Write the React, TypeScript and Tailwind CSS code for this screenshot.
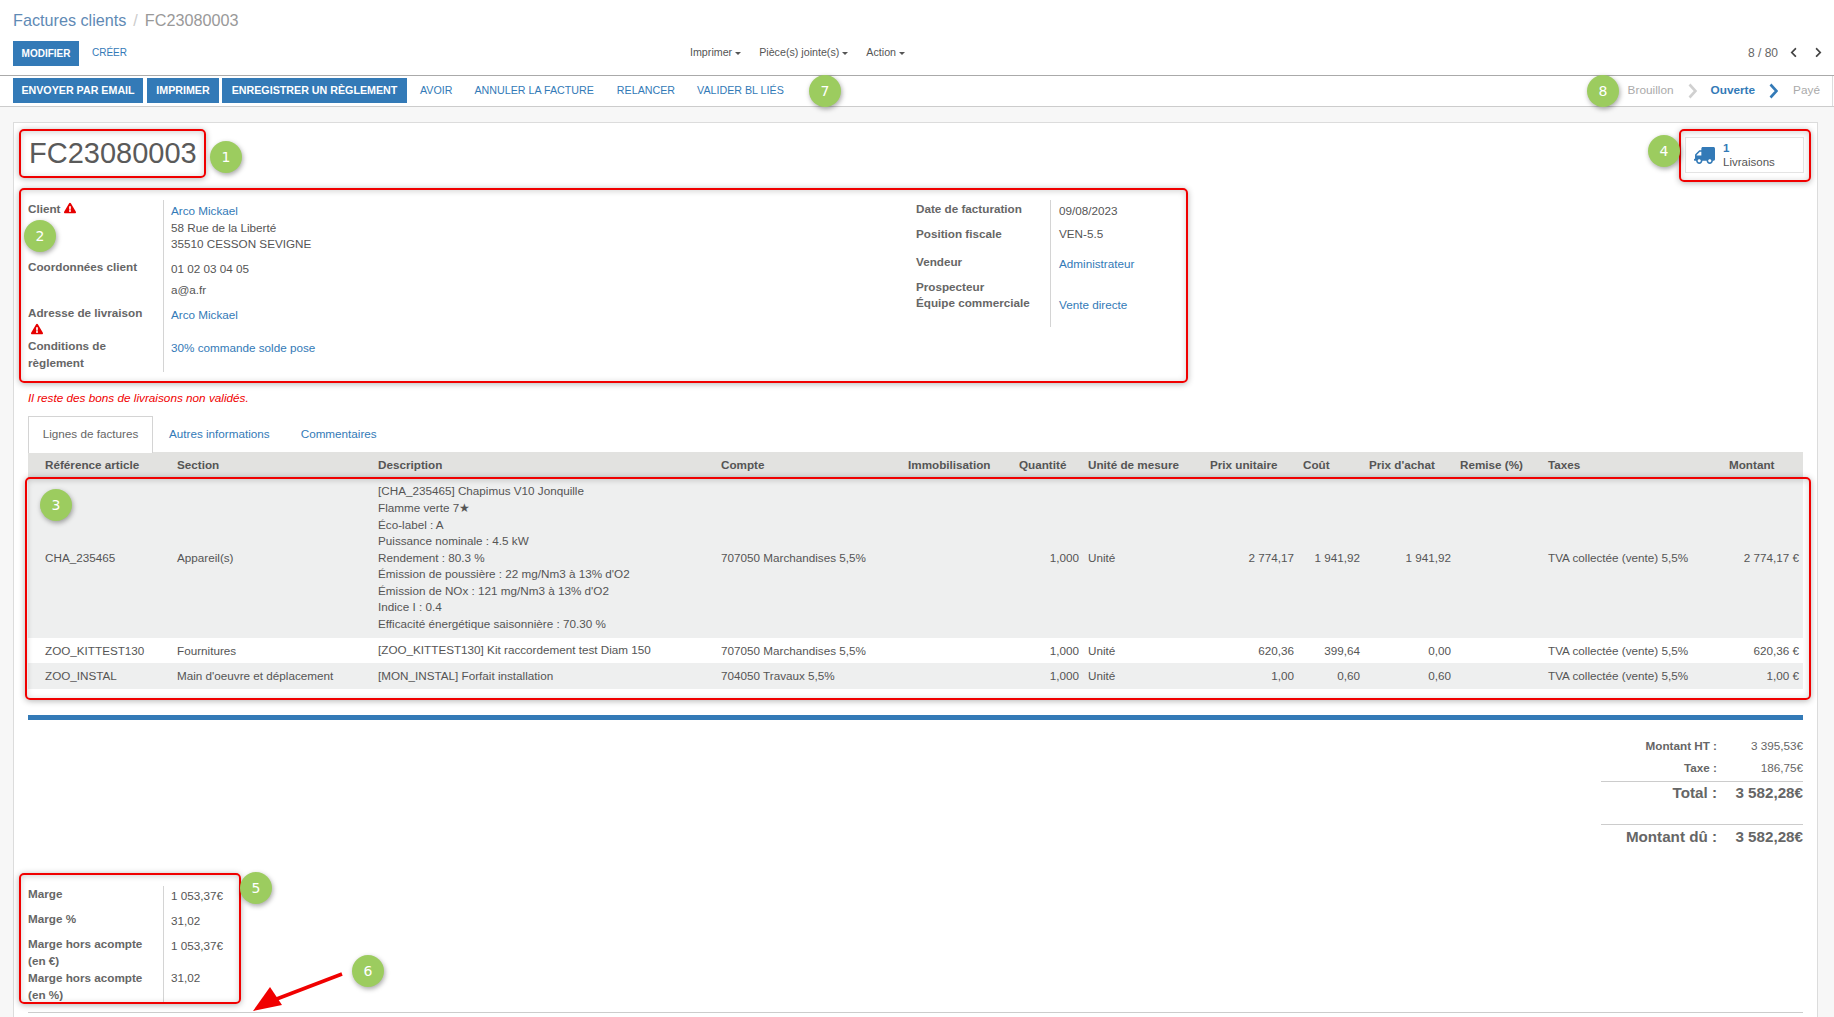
import type { ReactNode } from 'react';
import { FaChevronLeft, FaChevronRight, FaExclamationTriangle, FaTruck } from 'react-icons/fa';

const Caret = () => (
  <span className="ml-[3px] inline-block align-middle border-x-[3px] border-t-[3px] border-x-transparent border-t-[#555]" />
);

const Warn = () => <FaExclamationTriangle className="inline-block text-[#e60000] text-[12px] align-[-1px]" />;

const Badge = ({ n, cls }: { n: number; cls: string }) => (
  <div
    className={`absolute flex h-[32px] w-[32px] items-center justify-center rounded-full bg-[#9ccc5f] text-[14px] text-white shadow-[1px_2px_5px_rgba(0,0,0,0.35)] font-['DejaVu_Sans',sans-serif] ${cls}`}
  >
    {n}
  </div>
);

const RedBox = ({ cls }: { cls: string }) => (
  <div className={`absolute rounded-[5px] border-2 border-[#f00000] shadow-[0_1px_6px_rgba(0,0,0,0.3),inset_0_1px_6px_rgba(0,0,0,0.18)] ${cls}`} />
);

const Row = ({ h, lw, label, value, lpt = 0, vpt = 3, vpl = 'pl-[7px]' }: { h: string; lw: string; label?: ReactNode; value?: ReactNode; lpt?: number; vpt?: number; vpl?: string }) => (
  <div className={`flex leading-[16.6px] ${h}`}>
    <div className={`${lw} shrink-0 font-bold text-[#666]`} style={{ paddingTop: lpt }}>{label}</div>
    <div className={`flex-1 border-l border-[#d4d4d4] text-[#555] ${vpl}`} style={{ paddingTop: vpt }}>{value}</div>
  </div>
);

const A = ({ children }: { children: ReactNode }) => <span className="text-[#337ab7]">{children}</span>;

const headers = [
  ['Référence article', 'w-[146px] pl-[17px]'],
  ['Section', 'w-[201px] pl-[3px]'],
  ['Description', 'w-[343px] pl-[3px]'],
  ['Compte', 'w-[187px] pl-[3px]'],
  ['Immobilisation', 'w-[111px] pl-[3px]'],
  ['Quantité', 'w-[69px] pl-[3px]'],
  ['Unité de mesure', 'w-[122px] pl-[3px]'],
  ['Prix unitaire', 'w-[93px] pl-[3px]'],
  ['Coût', 'w-[66px] pl-[3px]'],
  ["Prix d'achat", 'w-[91px] pl-[3px]'],
  ['Remise (%)', 'w-[88px] pl-[3px]'],
  ['Taxes', 'w-[181px] pl-[3px]'],
  ['Montant', 'w-[77px] pl-[3px]'],
];

const descLines = [
  '[CHA_235465] Chapimus V10 Jonquille',
  'Flamme verte 7★',
  'Éco-label : A',
  'Puissance nominale : 4.5 kW',
  'Rendement : 80.3 %',
  'Émission de poussière : 22 mg/Nm3 à 13% d\'O2',
  'Émission de NOx : 121 mg/Nm3 à 13% d\'O2',
  'Indice I : 0.4',
  'Efficacité énergétique saisonnière : 70.30 %',
];

const lines = [
  {
    ref: 'CHA_235465', section: 'Appareil(s)', desc: descLines, compte: '707050 Marchandises 5,5%',
    pu: '2 774,17', cout: '1 941,92', achat: '1 941,92', montant: '2 774,17 €', cls: 'h-[160px] bg-[#eeefef]',
  },
  {
    ref: 'ZOO_KITTEST130', section: 'Fournitures', desc: ['[ZOO_KITTEST130] Kit raccordement test Diam 150'], compte: '707050 Marchandises 5,5%',
    pu: '620,36', cout: '399,64', achat: '0,00', montant: '620,36 €', cls: 'h-[25px] bg-white',
  },
  {
    ref: 'ZOO_INSTAL', section: "Main d'oeuvre et déplacement", desc: ['[MON_INSTAL] Forfait installation'], compte: '704050 Travaux 5,5%',
    pu: '1,00', cout: '0,60', achat: '0,60', montant: '1,00 €', cls: 'h-[26px] bg-[#eeefef]',
  },
];

const App = () => {
  return (
    <div className="relative h-[1017px] w-[1834px] overflow-hidden bg-white text-[11.7px] text-[#555] font-['Liberation_Sans',sans-serif]">
      {/* control panel */}
      <div className="h-[76px] border-b border-[#aaa] pl-[13px]">
        <div className="flex h-[41px] items-center pb-px text-[16.2px]">
          <span className="text-[#5f8ab5]">Factures clients</span>
          <span className="mx-[7px] text-[#ccc]">/</span>
          <span className="text-[#999]">FC23080003</span>
        </div>
        <div className="flex h-[25px] items-center text-[10.7px]">
          <div className="flex h-full w-[677px] items-center text-[10px]">
            <div className="flex h-full w-[66px] items-center justify-center bg-[#337ab7] pb-px font-bold text-white">MODIFIER</div>
            <span className="ml-[13px] pb-[2px] text-[#337ab7]">CRÉER</span>
          </div>
          <span className="pb-[2px]">Imprimer<Caret /></span>
          <span className="ml-[18px] pb-[2px]">Pièce(s) jointe(s)<Caret /></span>
          <span className="ml-[18px] pb-[2px]">Action<Caret /></span>
          <div className="ml-auto flex items-center pb-[2px] pr-[10px] text-[#666]">
            <span className="mr-[10px] text-[12px]">8 / 80</span>
            <FaChevronLeft className="mr-[14px] text-[11px] text-[#444]" />
            <FaChevronRight className="text-[11px] text-[#444]" />
          </div>
        </div>
      </div>

      {/* status bar */}
      <div className="flex h-[31px] items-start border-b border-[#ccc] pl-[13px] pr-px text-[10.7px]">
        <div className="mt-[2px] flex h-[25px] items-center">
          <div className="flex h-full w-[130px] items-center justify-center bg-[#337ab7] font-bold text-white">ENVOYER PAR EMAIL</div>
          <div className="ml-[4px] flex h-full w-[72px] items-center justify-center bg-[#337ab7] font-bold text-white">IMPRIMER</div>
          <div className="ml-[3px] flex h-full w-[185px] items-center justify-center bg-[#337ab7] font-bold text-white">ENREGISTRER UN RÈGLEMENT</div>
          <span className="ml-[13px] text-[#337ab7]">AVOIR</span>
          <span className="ml-[22px] text-[#337ab7]">ANNULER LA FACTURE</span>
          <span className="ml-[23px] text-[#337ab7]">RELANCER</span>
          <span className="ml-[22px] text-[#337ab7]">VALIDER BL LIÉS</span>
        </div>
        <div className="ml-auto flex h-full items-center border-r border-[#ddd] pr-[12px] text-[11.8px]">
          <span className="text-[#aaa]">Brouillon</span>
          <svg className="ml-[14px] mr-[14px]" width="9" height="16" viewBox="0 0 9 16" fill="none" stroke="#d0d0d0" strokeWidth="2.6"><path d="M1.5 1.5L7.5 8L1.5 14.5" /></svg>
          <span className="font-bold text-[#337ab7]">Ouverte</span>
          <svg className="ml-[14px] mr-[15px]" width="9" height="16" viewBox="0 0 9 16" fill="none" stroke="#337ab7" strokeWidth="2.6"><path d="M1.5 1.5L7.5 8L1.5 14.5" /></svg>
          <span className="text-[#aaa]">Payé</span>
        </div>
      </div>

      {/* sheet */}
      <div className="h-[910px] bg-[#f7f7f7] pl-[13px] pr-[16px] pt-[15px]">
        <div className="h-[895px] border-x border-t border-[#dcdcdc] bg-white px-[14px]">
          <div className="flex h-[77px] items-start justify-between pt-[12px]">
            <h1 className="ml-px text-[29px] leading-[36px] text-[#5a5a5a]">FC23080003</h1>
            <div className="mr-[-1px] mt-[2px] flex h-[36px] w-[119px] items-center border border-[#e4e4e4] pl-[8px]">
              <FaTruck className="-scale-x-100 text-[21px] text-[#337ab7]" />
              <div className="ml-[8px] text-[11.5px] leading-[14px] text-[#555]">
                <div className="font-bold text-[#337ab7]">1</div>
                <div>Livraisons</div>
              </div>
            </div>
          </div>

          {/* infos */}
          <div className="flex">
            <div className="w-[888px]">
              <Row h="h-[57px]" lw="w-[135px]" lpt={1} label={<>Client <Warn /></>} value={<><A>Arco Mickael</A><br />58 Rue de la Liberté<br />35510 CESSON SEVIGNE</>} />
              <Row h="h-[22px]" lw="w-[135px]" lpt={2} vpt={4} label="Coordonnées client" value="01 02 03 04 05" />
              <Row h="h-[25px]" lw="w-[135px]" value="a@a.fr" />
              <Row h="h-[33px]" lw="w-[135px]" lpt={1} label={<>Adresse de livraison<br /><span className="pl-[3px]"><Warn /></span></>} value={<A>Arco Mickael</A>} />
              <Row h="h-[35px]" lw="w-[135px]" lpt={1} label={<>Conditions de<br />règlement</>} value={<A>30% commande solde pose</A>} />
            </div>
            <div className="w-[230px]">
              <Row h="h-[25px]" lw="w-[134px]" lpt={1} vpl="pl-[8px]" label="Date de facturation" value="09/08/2023" />
              <Row h="h-[27px]" lw="w-[134px]" lpt={1} vpt={1} vpl="pl-[8px]" label="Position fiscale" value="VEN-5.5" />
              <Row h="h-[26px]" lw="w-[134px]" lpt={2} vpt={4} vpl="pl-[8px]" label="Vendeur" value={<A>Administrateur</A>} />
              <Row h="h-[17px]" lw="w-[134px]" lpt={1} vpl="pl-[8px]" label="Prospecteur" />
              <Row h="h-[32px]" lw="w-[134px]" vpt={2} vpl="pl-[8px]" label="Équipe commerciale" value={<A>Vente directe</A>} />
            </div>
          </div>

          <p className="mt-[17px] h-[17px] text-[11.75px] italic leading-[17px] text-[#f00000]">Il reste des bons de livraisons non validés.</p>

          {/* tabs */}
          <div className="mt-[10px] flex h-[36px] pb-px">
            <div className="relative z-10 flex h-[37px] w-[125px] items-center justify-center border-x border-t border-[#d4d4d4] bg-white pb-[2px] text-[#666]">Lignes de factures</div>
            <div className="ml-px flex items-center px-[15px] text-[#337ab7]">Autres informations</div>
            <div className="ml-px flex items-center px-[15px] text-[#337ab7]">Commentaires</div>
          </div>

          {/* lignes */}
          <table className="w-[1775px] table-fixed border-collapse">
            <thead>
              <tr className="h-[26px] bg-[#e2e2e0] text-left font-bold text-[#555]">
                {headers.map(([title, cls]) => (
                  <th key={title} className={`${cls} whitespace-nowrap`}>{title}</th>
                ))}
              </tr>
            </thead>
            <tbody>
              {lines.map((l) => (
                <tr key={l.ref} className={l.cls}>
                  <td className="pl-[17px]">{l.ref}</td>
                  <td className="pl-[3px]">{l.section}</td>
                  <td className="pl-[3px] leading-[16.6px]">
                    {l.desc.map((d) => <div key={d}>{d}</div>)}
                  </td>
                  <td className="pl-[3px]">{l.compte}</td>
                  <td />
                  <td className="pr-[6px] text-right">1,000</td>
                  <td className="pl-[3px]">Unité</td>
                  <td className="pr-[6px] text-right">{l.pu}</td>
                  <td className="pr-[6px] text-right">{l.cout}</td>
                  <td className="pr-[6px] text-right">{l.achat}</td>
                  <td />
                  <td className="pl-[3px] whitespace-nowrap">TVA collectée (vente) 5,5%</td>
                  <td className="pr-[4px] text-right whitespace-nowrap">{l.montant}</td>
                </tr>
              ))}
            </tbody>
          </table>

          <div className="mt-[26px] h-[5px] bg-[#337ab7]" />

          {/* totaux */}
          <div className="mt-[17px] ml-auto w-[202px] leading-[17px]">
            <div className="flex h-[22px]"><span className="w-[116px] text-right font-bold text-[#666]">Montant HT :</span><span className="flex-1 text-right text-[#666]">3 395,53€</span></div>
            <div className="flex h-[22px]"><span className="w-[116px] text-right font-bold text-[#666]">Taxe :</span><span className="flex-1 text-right text-[#666]">186,75€</span></div>
            <div className="flex h-[23px] border-t border-[#ccc] text-[15.2px] font-bold leading-[22px] text-[#666]"><span className="w-[116px] text-right">Total :</span><span className="flex-1 text-right">3 582,28€</span></div>
            <div className="mt-[20px] flex h-[24px] border-t border-[#ccc] pt-px text-[15.2px] font-bold leading-[22px] text-[#666]"><span className="w-[116px] text-right">Montant dû :</span><span className="flex-1 text-right">3 582,28€</span></div>
          </div>

          {/* marges */}
          <div className="mt-[38px] w-[213px]">
            <Row h="h-[25px]" lw="w-[135px]" vpt={2} label="Marge" value="1 053,37€" />
            <Row h="h-[25px]" lw="w-[135px]" vpt={2} label="Marge %" value="31,02" />
            <Row h="h-[34px]" lw="w-[135px]" vpt={2} label={<>Marge hors acompte<br />(en €)</>} value="1 053,37€" />
            <Row h="h-[32px]" lw="w-[135px]" vpt={0} label={<>Marge hors acompte<br />(en %)</>} value="31,02" />
          </div>
          <div className="mt-[10px] border-t border-[#ccc]" />
        </div>
      </div>

      {/* annotations */}
      <RedBox cls="left-[19px] top-[129px] h-[49px] w-[187px]" />
      <RedBox cls="left-[19px] top-[188px] h-[195px] w-[1169px]" />
      <RedBox cls="left-[25px] top-[477px] h-[223px] w-[1786px]" />
      <RedBox cls="left-[1679px] top-[129px] h-[53px] w-[132px]" />
      <RedBox cls="left-[19px] top-[873px] h-[131px] w-[222px]" />
      <Badge n={1} cls="left-[210px] top-[141px]" />
      <Badge n={2} cls="left-[24px] top-[220px]" />
      <Badge n={3} cls="left-[40px] top-[489px]" />
      <Badge n={4} cls="left-[1648px] top-[135px]" />
      <Badge n={5} cls="left-[240px] top-[872px]" />
      <Badge n={6} cls="left-[352px] top-[955px]" />
      <Badge n={7} cls="left-[809px] top-[75px]" />
      <Badge n={8} cls="left-[1587px] top-[75px]" />
      <svg className="absolute left-[250px] top-[970px]" width="96" height="44" viewBox="0 0 96 44">
        <path d="M92 4L24 30" stroke="#f00000" strokeWidth="3.5" fill="none" />
        <path d="M3 41L20 17L32 35Z" fill="#f00000" />
      </svg>
    </div>
  );
};

export default App;
